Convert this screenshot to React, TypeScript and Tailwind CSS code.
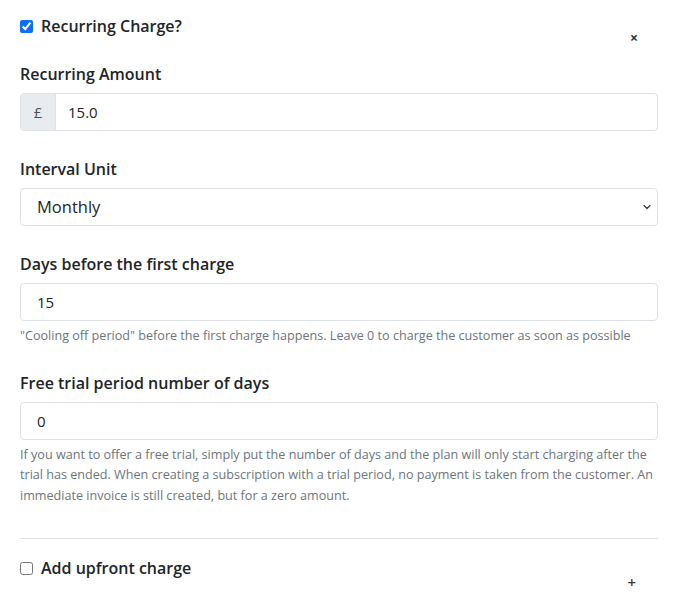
import React from 'react';

const font = { fontFamily: '"Open Sans", "Liberation Sans", sans-serif' };

const Label = ({ children }: { children: React.ReactNode }) => (
  <label className="block mb-[9px] text-[16px] font-semibold leading-[20px] text-[#212529]">{children}</label>
);

const Help = ({ children }: { children: React.ReactNode }) => (
  <p className="mt-[5px] text-[12.6px] leading-[20.5px] text-[#6c757d]">{children}</p>
);

const App = () => {
  return (
    <div className="w-[674px] h-[604px] bg-white pl-5 pr-4 pt-[15px] text-[#212529]" style={font}>
      {/* Recurring toggle */}
      <div className="flex items-start justify-between">
        <label className="flex items-center gap-[8px] text-[16px] font-semibold leading-[22px]">
          <input type="checkbox" defaultChecked className="w-[13px] h-[13px] accent-[#0d6efd]" />
          Recurring Charge?
        </label>
        <button className="mt-[16px] mr-[20px] text-[14px] leading-none font-bold text-[#333]">×</button>
      </div>

      <div className="mt-[19px]">
        <Label>Recurring Amount</Label>
        <div className="flex h-[38px] border border-[#dee2e6] rounded-[4px] overflow-hidden">
          <span className="w-[35px] flex items-center justify-center bg-[#e9ecef] border-r border-[#dee2e6] text-[15px] text-[#495057]">£</span>
          <input defaultValue="15.0" className="flex-1 px-3 text-[15px] text-[#212529] outline-none" />
        </div>
      </div>

      <div className="mt-[28px]">
        <Label>Interval Unit</Label>
        <div className="relative h-[38px] border border-[#dee2e6] rounded-[4px] flex items-center">
          <span className="pl-[16px] text-[16.5px] text-[#212529]">Monthly</span>
          <svg className="absolute right-[5px] top-[14px]" width="10" height="8" viewBox="0 0 16 16">
            <path d="M2 5l6 6 6-6" fill="none" stroke="#343a40" strokeWidth="2.5" strokeLinecap="round" strokeLinejoin="round" />
          </svg>
        </div>
      </div>

      <div className="mt-[28px]">
        <Label>Days before the first charge</Label>
        <input defaultValue="15" className="w-full h-[38px] border border-[#dee2e6] rounded-[4px] px-4 text-[15px] outline-none" />
        <Help>"Cooling off period" before the first charge happens. Leave 0 to charge the customer as soon as possible</Help>
      </div>

      <div className="mt-[26px]">
        <Label>Free trial period number of days</Label>
        <input defaultValue="0" className="w-full h-[38px] border border-[#dee2e6] rounded-[4px] px-4 text-[15px] outline-none" />
        <Help>
          If you want to offer a free trial, simply put the number of days and the plan will only start charging after the
          trial has ended. When creating a subscription with a trial period, no payment is taken from the customer. An
          immediate invoice is still created, but for a zero amount.
        </Help>
      </div>

      <hr className="mt-[32px] border-[#dee2e6]" />

      <div className="mt-[18px] flex items-start justify-between">
        <label className="flex items-center gap-[8px] text-[16px] font-semibold leading-[22px]">
          <input type="checkbox" className="w-[13px] h-[13px]" />
          Add upfront charge
        </label>
        <span className="mt-[18px] mr-[22px] text-[15px] leading-none font-semibold text-[#333]">+</span>
      </div>
    </div>
  );
};

export default App;
